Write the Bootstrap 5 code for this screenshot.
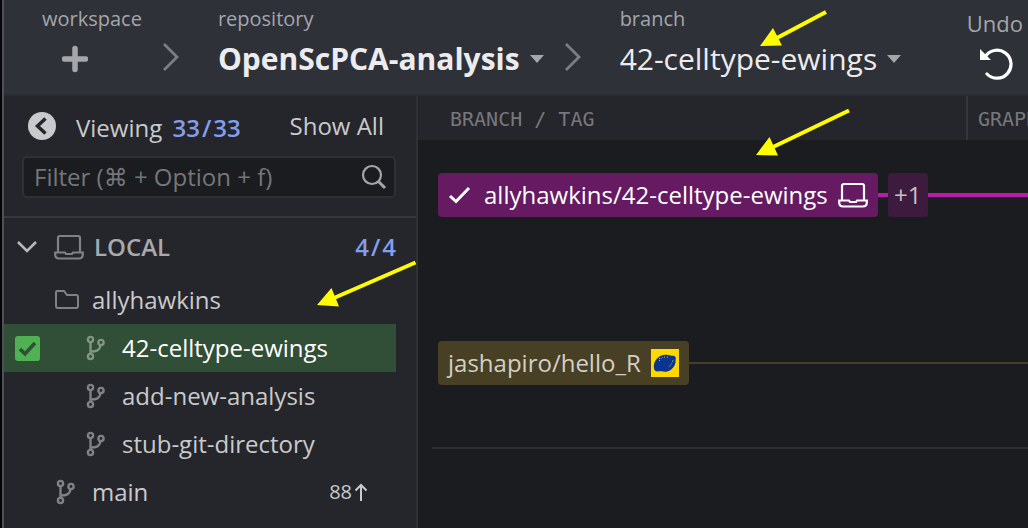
<!DOCTYPE html>
<html lang="en" data-bs-theme="dark">
<head>
<meta charset="utf-8">
<meta name="viewport" content="width=device-width, initial-scale=1">
<title>OpenScPCA-analysis</title>
<link href="https://cdn.jsdelivr.net/npm/bootstrap@5.3.0/dist/css/bootstrap.min.css" rel="stylesheet">
<style>
  body { font-family: "Open Sans", "DejaVu Sans", sans-serif; font-size: 24px; line-height: 32px; background: #1b1c20; color: #c9cacc; }
  button { color: inherit; }
  svg { display: block; flex: none; }
  .app-shell { border-left: 2px solid #4f5157; margin-left: 2px; box-shadow: -2px 0 #050608; }
  .topbar { background: #2e3138; border-bottom: 2px solid #282b32; height: 96px; padding: 5px 5px 0 38px; }
  .crumb-label { font-size: 20px; line-height: 28px; color: #a4a6aa; }
  .crumb-value { font-size: 30px; line-height: 48px; height: 52px; color: #ececee; gap: 10px; }
  .crumb-sep { padding: 37px 0 0 20px; }
  .crumb-next { padding-left: 38px; }
  .undo-label { font-size: 22px; line-height: 28px; color: #a4a6aa; }
  .plain { background: none; border: 0; padding: 0; white-space: nowrap; }
  .side { width: 414px; flex: none; background: #25262b; border-right: 2px solid #303136; }
  .side-head { height: 60px; padding: 0 32px 0 24px; gap: 20px; }
  .num { color: #859eeb; font-weight: 600; }
  .num i { font-style: normal; margin: 0 2px; }
  .filter-box { height: 42px; margin: 0 20px 18px 18px; background: #1b1c20; border: 2px solid #2f3035; border-radius: 5px; padding: 0 7px 0 10px; }
  .filter-box input { font-size: 24px; line-height: 32px; color: #c9cacc; background: none; border: 0; padding: 0; outline: 0; min-width: 0; }
  .filter-box input::placeholder { color: #75767a; opacity: 1; }
  .tree-top { border-top: 2px solid #37383d; height: 60px; padding: 0 20px 0 12px; }
  .tree-title { color: #a9aaad; font-weight: 600; padding-left: 10px; }
  .tree-row { height: 48px; margin-right: 20px; color: #c9cacc; }
  .tree-row.current { background: #314e36; color: #fff; }
  .lvl-1 { padding-left: 50px; }
  .lvl-2 { padding-left: 80px; }
  .current.lvl-2 { padding-left: 11px; }
  .tree-row .form-check-input { width: 25px; height: 25px; margin: 0 44px 0 0; flex: none; border: 0; border-radius: 3px; background-color: #50b154; background-size: 25px; background-image: url("data:image/svg+xml,%3csvg xmlns='http://www.w3.org/2000/svg' viewBox='0 0 25 25'%3e%3cpath d='M5 13l5 5 10-11' fill='none' stroke='%23314e36' stroke-width='3.6'/%3e%3c/svg%3e"); }
  .icon-dim { color: #808186; }
  .current .icon-dim { color: #809583; }
  .ahead { font-size: 20px; gap: 2px; }
  .col-heads { height: 44px; margin-bottom: 13px; background: #25262b; font-family: "DejaVu Sans Mono", monospace; font-size: 20px; line-height: 46px; color: #77787c; }
  .col-ref { width: 550px; flex: none; padding-left: 32px; border-right: 2px solid #36373c; }
  .col-graph { padding-left: 10px; }
  .graph-row { height: 84px; padding-left: 20px; }
  .ref-pill { height: 44px; border-radius: 4px; padding: 0 10px; white-space: nowrap; }
  .ref-current { background: #651a62; color: #fff; gap: 10px; }
  .ref-current .tick { margin-right: 2px; }
  .ref-more { background: #3d1b3e; color: #c9bfca; width: 40px; }
  .ref-lemon { background: #474025; color: #d4cfc4; gap: 10px; }
  .wire { height: 4px; background: #bb1ba9; }
  .wire-short { width: 10px; }
  .wire-lemon { height: 2px; background: #474025; }
  .graph-rule { border-top: 2px solid #2d2e33; margin: 42px 0 0 14px; }
  .pointer { position: absolute; z-index: 5; fill: #fffb00; stroke: #fffb00; pointer-events: none; }
  .pointer-a { left: 758px; top: 8px; }
  .pointer-b { left: 754px; top: 106px; }
  .pointer-c { left: 315px; top: 259px; }
</style>
</head>
<body class="position-relative overflow-hidden">
<svg width="0" height="0" class="position-absolute" aria-hidden="true">
  <symbol id="branch" viewBox="0 0 22 26"><g fill="none" stroke="currentColor" stroke-width="2.400"><circle cx="6.500" cy="4.500" r="2.600"/><circle cx="6.500" cy="21.500" r="2.600"/><circle cx="17" cy="7.500" r="2.600"/><path d="M6.500 7.500v11M16.500 10.500c-1 5-4 6-9.500 6"/></g></symbol>
  <symbol id="laptop" viewBox="0 0 30 26"><g fill="none" stroke="currentColor" stroke-width="2.200"><path d="M4 18V4q0-2 2-2h18q2 0 2 2v14"/><path d="M1.200 18.500H11l1 1.500h6l1-1.500h9.800v2q0 4-4 4H5.200q-4 0-4-4z"/></g></symbol>
  <symbol id="sep" viewBox="0 0 18 30"><path d="M2 2l13 13L2 28" fill="none" stroke="#7c7e83" stroke-width="2.800"/></symbol>
  <symbol id="caret" viewBox="0 0 14 8"><path d="M0 0h14L7 8z" fill="#a4a6aa"/></symbol>
</svg>
<div class="app-shell d-flex flex-column min-vh-100">
  <header class="topbar d-flex">
    <div>
      <div class="crumb-label">workspace</div>
      <button class="plain crumb-value d-flex align-items-center ps-3 ms-1" aria-label="Add workspace">
        <svg width="26" height="28" viewBox="0 0 26 28"><path d="M13 3.500v21M2.500 14h21" stroke="#a4a6aa" stroke-width="5.500" stroke-linecap="round"/></svg>
      </button>
    </div>
    <div class="crumb-sep"><svg width="18" height="30"><use href="#sep"/></svg></div>
    <div class="crumb-next">
      <div class="crumb-label">repository</div>
      <button class="plain crumb-value fw-bold d-flex align-items-center">OpenScPCA-analysis <svg width="14" height="8"><use href="#caret"/></svg></button>
    </div>
    <div class="crumb-sep"><svg width="18" height="30"><use href="#sep"/></svg></div>
    <div class="crumb-next">
      <div class="crumb-label">branch</div>
      <button class="plain crumb-value d-flex align-items-center">42-celltype-ewings <svg width="14" height="8"><use href="#caret"/></svg></button>
    </div>
    <button class="plain ms-auto d-flex flex-column align-items-center pt-1">
      <span class="undo-label">Undo</span>
      <svg class="mt-2" width="36" height="36" viewBox="0 0 36 36"><path d="M8 12A14 14 0 1 1 10 29" fill="none" stroke="#fff" stroke-width="3.200" stroke-linecap="round"/><path d="M3 4v11h11z" fill="#fff"/></svg>
    </button>
  </header>

  <div class="d-flex flex-grow-1">
    <aside class="side">
      <div class="side-head d-flex align-items-center">
        <button class="plain" aria-label="Collapse"><svg width="28" height="28" viewBox="0 0 28 28"><circle cx="14" cy="14" r="14" fill="#c9cacc"/><path d="M17.500 6.500L9.500 14l8 7.500" fill="none" stroke="#25262b" stroke-width="3.500"/></svg></button>
        <div class="text-nowrap pt-1">Viewing <span class="num ms-1">33<i>/</i>33</span></div>
        <button class="plain ms-auto">Show All</button>
      </div>
      <div class="filter-box d-flex align-items-center">
        <input class="flex-grow-1" type="text" aria-label="Filter" placeholder="Filter (⌘ + Option + f)">
        <svg width="26" height="26" viewBox="0 0 26 26"><g fill="none" stroke="#a4a6aa" stroke-width="2.200"><circle cx="11" cy="11" r="9"/><path d="M17 17l7 7" stroke-width="3"/></g></svg>
      </div>
      <div class="tree-top d-flex align-items-center">
        <svg width="22" height="14" viewBox="0 0 22 14"><path d="M2 2l9 9 9-9" fill="none" stroke="#b8b9bc" stroke-width="2.500"/></svg>
        <svg class="icon-dim ms-3" style="" width="30" height="26"><use href="#laptop"/></svg>
        <span class="tree-title">LOCAL</span>
        <span class="num ms-auto">4<i>/</i>4</span>
      </div>
      <ul class="list-unstyled mb-0">
        <li class="tree-row lvl-1 d-flex align-items-center"><svg class="icon-dim me-2" width="26" height="22" viewBox="0 0 26 22"><path d="M3 2h7l3 4h9q2 0 2 2v9q0 2-2 2H4q-2 0-2-2V4q0-2 1-2z" fill="none" stroke="currentColor" stroke-width="2"/></svg><span class="ms-1">allyhawkins</span></li>
        <li class="tree-row lvl-2 current d-flex align-items-center"><input class="form-check-input" type="checkbox" id="cur" checked><svg class="icon-dim me-3" width="22" height="26"><use href="#branch"/></svg><label for="cur">42-celltype-ewings</label></li>
        <li class="tree-row lvl-2 d-flex align-items-center"><svg class="icon-dim me-3" width="22" height="26"><use href="#branch"/></svg>add-new-analysis</li>
        <li class="tree-row lvl-2 d-flex align-items-center"><svg class="icon-dim me-3" width="22" height="26"><use href="#branch"/></svg>stub-git-directory</li>
        <li class="tree-row lvl-1 d-flex align-items-center"><svg class="icon-dim me-3" width="22" height="26"><use href="#branch"/></svg>main
          <span class="ahead ms-auto me-4 pe-1 d-flex align-items-center">88 <svg width="14" height="18" viewBox="0 0 14 18"><path d="M7 18V2M1.500 7.500L7 2l5.500 5.500" fill="none" stroke="currentColor" stroke-width="2"/></svg></span></li>
      </ul>
    </aside>

    <main class="flex-grow-1 overflow-hidden">
      <div class="col-heads d-flex overflow-hidden text-nowrap">
        <div class="col-ref">BRANCH / TAG</div>
        <div class="col-graph">GRAPH</div>
      </div>
      <div class="graph-row d-flex align-items-center">
        <div class="ref-pill ref-current d-flex align-items-center">
          <svg class="tick" width="24" height="20" viewBox="0 0 24 20"><path d="M2 11l6 5.500L21 3" fill="none" stroke="#fff" stroke-width="3"/></svg>allyhawkins/42-celltype-ewings<svg width="30" height="26"><use href="#laptop"/></svg>
        </div>
        <div class="wire wire-short"></div>
        <div class="ref-pill ref-more d-flex align-items-center justify-content-center">+1</div>
        <div class="wire flex-grow-1"></div>
      </div>
      <div class="graph-row"></div>
      <div class="graph-row d-flex align-items-center">
        <div class="ref-pill ref-lemon d-flex align-items-center">jashapiro/hello_R
          <svg width="28" height="28" viewBox="0 0 28 28"><path d="M0 0h28v28H0z" fill="#ffd800"/><path d="M3 19.500C2.500 16 3 13 6 9.500 9 6.200 13 5 17 6c2 .6 3.500.6 5 .7 2.500 0 3.200 1.800 2.600 4.300.3 4-1.600 7.500-4.600 9.700-3 2.200-6.500 2.400-9.500 1.600-1.500-.3-2.500 0-4 .1-2 0-3.200-1-3.500-2.900z" fill="#0b3390"/><path d="M8 12l1-1M10.500 9.500l1-1M13 8h1M8 9.500h1M16 8h1" stroke="#d8c534"/><path d="M22 11q-1 4.500-4.500 7" fill="none" stroke="#8d963c" stroke-dasharray="2 1"/></svg>
        </div>
        <div class="wire-lemon flex-grow-1"></div>
      </div>
      <div class="graph-rule"></div>
    </main>
  </div>
</div>

<svg class="pointer pointer-a" width="72" height="42" viewBox="758 8 72 42"><path d="M826 12L775 39" stroke-width="4"/><path d="M760 46l13-18 9 17.500z" stroke="none"/></svg>
<svg class="pointer pointer-b" width="98" height="54" viewBox="754 106 98 54"><path d="M849 110.500L772 147.500" stroke-width="4"/><path d="M756 155l13.500-18 8.500 18.500z" stroke="none"/></svg>
<svg class="pointer pointer-c" width="104" height="52" viewBox="315 259 104 52"><path d="M415.500 262.500L334 298" stroke-width="4"/><path d="M317 305l14.500-17 7.500 18.500z" stroke="none"/></svg>
<script src="https://cdn.jsdelivr.net/npm/bootstrap@5.3.0/dist/js/bootstrap.bundle.min.js"></script>
</body>
</html>
